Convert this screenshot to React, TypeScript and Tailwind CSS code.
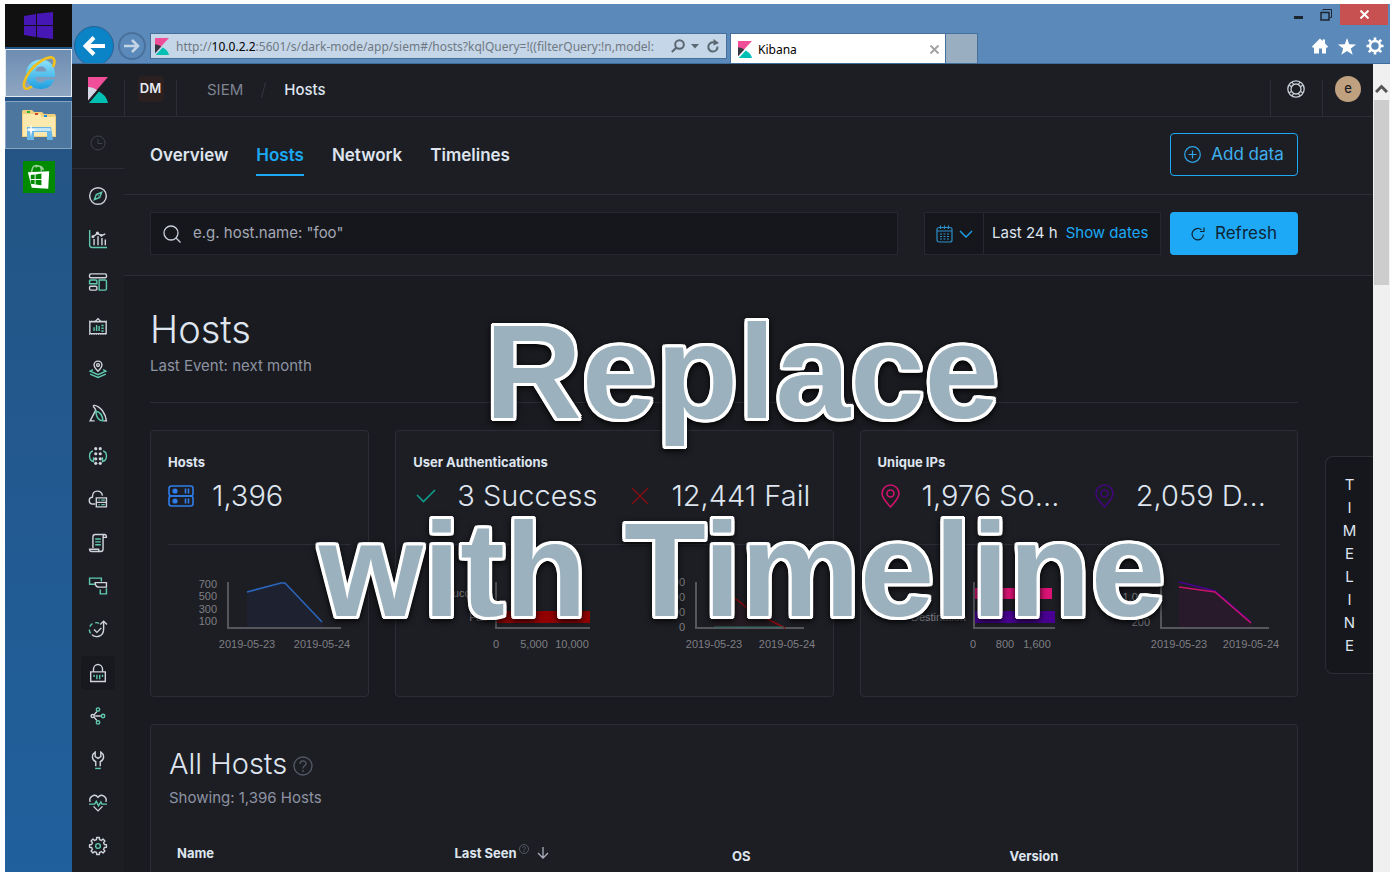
import React from "react";

type Children = { children: React.ReactNode };

const LINE = "#d0d4dc";
const TEAL = "#5fc9ae";

function NavSvg({ children }: Children) {
  return (
    <svg viewBox="0 0 32 32" className="size-[18px] overflow-visible" fill="none" stroke={LINE} strokeWidth="2.5" aria-hidden="true">
      {children}
    </svg>
  );
}

function gearPath(cx: number, cy: number, outer: number, inner: number, teeth: number) {
  const step = (Math.PI * 2) / teeth;
  const point = (r: number, a: number) => `${(cx + r * Math.cos(a)).toFixed(2)} ${(cy + r * Math.sin(a)).toFixed(2)}`;
  let d = "";
  for (let i = 0; i < teeth; i++) {
    const a = i * step - Math.PI / 2;
    d += `${i === 0 ? "M" : "L"}${point(outer, a - step * 0.2)}L${point(outer, a + step * 0.2)}L${point(inner, a + step * 0.3)}L${point(inner, a + step * 0.7)}`;
  }
  return d + "Z";
}

const navItems: { label: string; active?: boolean; art: React.ReactNode }[] = [
  { label: "Discover", art: <><circle cx="16" cy="16" r="14.8" /><path stroke={TEAL} d="M22.5 9.5l-3.5 9-9.5 4 3.5-9zM16 16l1-1" /></> },
  { label: "Visualize", art: <><path stroke={TEAL} d="M1.2 0v27a4 4 0 0 0 4 4H32" /><path d="M9 16v11M16 11v16M23 14v13M29 17v10M7 12l8-6 7 4 7-3" /><circle cx="15" cy="5.5" r="1.6" /><circle cx="22" cy="9.5" r="1.2" /><circle cx="7" cy="12" r="1.4" /></> },
  { label: "Dashboard", art: <><rect x="1" y="1.5" width="30" height="7" rx="2" /><rect x="1" y="23.5" width="13" height="7" rx="2" /><path stroke={TEAL} d="M3 12.5h9a2 2 0 0 1 2 2V19H1v-4.5a2 2 0 0 1 2-2zM18 12.5h11a2 2 0 0 1 2 2v14a2 2 0 0 1-2 2H18z" /></> },
  { label: "Canvas", art: <><path d="M11 8l5-5 5 5M1.5 8.5h29v21h-29z" /><path strokeDasharray="2 2" strokeWidth="1.5" d="M0 31h32M0 7h10M22 7h10" /><path stroke={TEAL} d="M9 18v7M13.5 14v11M18 16v9M22 15h4M22 20h4M22 25h4" /></> },
  { label: "Maps", art: <><path d="M16 20c-4-4-7-7-7-11a7 7 0 0 1 14 0c0 4-3 7-7 11z" /><circle cx="16" cy="9" r="2.5" /><path stroke={TEAL} d="M7 17l-5 3 14 6 14-6-5-3M2 25l14 6 14-6" /></> },
  { label: "Machine Learning", art: <><path d="M8 2c13 2 21 14 23 28H26M8 2v3c2 2 3 3 4 6L2 30h8" /><path stroke={TEAL} d="M12 13c7 1 12 8 13 17-8 0-12-7-13-17z" /></> },
  { label: "Graph", art: <><path stroke={TEAL} d="M7 7C2 8 1 12 1 16c0 6 2 9 7 10v-8M25 7c5 1 6 5 6 9 0 6-2 9-7 10v-8" /><g fill={LINE} stroke="none"><circle cx="12" cy="3" r="2.8" /><circle cx="20" cy="3" r="2.8" /><circle cx="12" cy="12" r="2.8" /><circle cx="20" cy="12" r="2.8" /><circle cx="12" cy="21" r="2.8" /><circle cx="20" cy="21" r="2.8" /><circle cx="12" cy="29" r="2.8" /><circle cx="20" cy="29" r="2.8" /></g></> },
  { label: "Infrastructure", art: <><path d="M11 25H7a6 6 0 0 1-1-12C6 6 10 2 15 2s8 3 9 8M13 14h18v16H13zM13 22h18" /><path stroke={TEAL} d="M17 18h2M22 18h6M17 26h2M22 26h6" /></> },
  { label: "Logs", art: <><path d="M7 25V5c0-3 2-4 4-4h17c2 0 3 2 3 5h-6M25 6v20c0 3-2 5-4 5H5c-3 0-4-2-4-4h16c0 2 1 4 4 4M25 6c0-3 1-5 3-5" /><path stroke={TEAL} d="M11 9h10M11 14h10M11 19h10" /></> },
  { label: "APM", art: <><path stroke={TEAL} d="M12 13H1V2h21v6M20 22v8h11V20" /><path d="M11 10h20v8H19c-5 0-8-3-8-8z" /></> },
  { label: "Uptime", art: <><path stroke={TEAL} strokeDasharray="7 5" d="M18 6A12 12 0 0 0 5 26" /><path d="M5 26c6 6 21 5 21-10V3M20 8l6-6 6 6M9 17l5 5 8-8" /></> },
  { label: "SIEM", active: true, art: <><path d="M3 14h26v17H3zM8 14V9a8 8 0 0 1 16 0v5" /><path stroke={TEAL} d="M9 19v4M14 19v8M19 19v8M24 19v4" /></> },
  { label: "Stack", art: <><circle cx="6.5" cy="16" r="2.8" /><path d="M11 16h10M9 14l5-6M9 18l5 6" /><g stroke={TEAL}><circle cx="16" cy="4.5" r="3" /><circle cx="16" cy="27.5" r="3" /><circle cx="25" cy="16" r="3" /></g></> },
  { label: "Dev Tools", art: <><path d="M12 27v-8c-4-2-6-5-6-9 0-3 2-6 5-8v8l5 3 5-3V2c3 2 5 5 5 8 0 4-2 7-6 9v8" /><path stroke={TEAL} d="M11 31h10" /></> },
  { label: "Monitoring", art: <><path d="M2 14C-1 5 10-2 16 6c6-8 17-1 14 8M8 22l8 8 8-8" /><path stroke={TEAL} d="M0 18h10l3-5 4 8 4-7 2 4h9" /></> },
  { label: "Management", art: <><path strokeLinejoin="round" d={gearPath(16, 16, 15.2, 11.6, 8)} /><circle stroke={TEAL} cx="16" cy="16" r="4.2" /></> },
];

function KibanaMark({ className, mid }: { className: string; mid: string }) {
  return (
    <svg viewBox="0 0 20 26" className={className} preserveAspectRatio="none" aria-hidden="true">
      <path fill="#f04e98" d="M0 0h20L0 23z" />
      <path fill={mid} d="M0 10v13.5L9 13C6 11 3 10 0 10z" />
      <path fill="#00bfb3" d="M11 14.5L1 26h19c-1-5-4-9-9-11.5z" />
    </svg>
  );
}

function Taskbar() {
  return (
    <aside className="flex w-[67px] shrink-0 flex-col bg-linear-to-b from-[#245280] to-[#20609d]">
      <button aria-label="Start" className="flex h-[43px] items-center justify-center bg-[#111112]">
        <svg viewBox="0 0 29 27" className="h-[27px] w-[29px]" fill="#4617b4">
          <path d="M0 4l12-2v11H0zM13 1.8L29 0v13H13zM0 14h12v11L0 23zM13 14h16v13l-16-1.8z" />
        </svg>
      </button>
      <div className="flex flex-col gap-1 py-0.5">
        <button aria-label="Internet Explorer" className="flex h-12 items-center justify-center border border-[#e3e9f0] bg-linear-to-b from-[#6d8db2] to-[#8fa6c2]">
          <svg viewBox="0 0 34 34" className="size-[34px]" fill="none">
            <defs>
              <linearGradient id="ieBlue" x1="0" y1="0" x2="0" y2="1">
                <stop offset="0" stopColor="#8fe3fb" />
                <stop offset="1" stopColor="#1f9fe0" />
              </linearGradient>
            </defs>
            <path fill="url(#ieBlue)" fillRule="evenodd" d="M19 3.5C10 3.5 4 10 4 18.5S10 33 19 33c7 0 11.5-4 13-9.5h-8c-1 2-2.5 3-5 3-3.5 0-5.5-2-5.8-5.5H33C34 10 28 3.5 19 3.5zM13.3 15.5c.6-3.3 2.7-5 5.7-5s5 1.7 5.4 5z" />
            <path stroke="#f3c11b" strokeWidth="2.6" strokeLinecap="round" d="M31.5 10c1.5-4 1.5-7.5-1.5-8.5C25 .5 14 7 8 15 3 22 0 30 3 32.3c1.5 1 4 0 6-1.3" />
          </svg>
        </button>
        <button aria-label="File Explorer" className="flex h-12 items-center justify-center border border-[#86a5c4] bg-[#4d769f]">
          <svg viewBox="0 0 34 32" className="h-8 w-[34px]">
            <path fill="#f0cf7d" d="M0 2l1-1h9l2 2h8l2 2h11l1 2v21H0z" />
            <path fill="#fbe9ad" d="M1 5h17l2 3h13v19H1z" />
            <path fill="#2fae3c" d="M5 2h3v2H5z" />
            <path fill="#d9472b" d="M13 4h3v2h-3z" />
            <path fill="#1e8fe0" d="M22 6h3v2h-3z" />
            <path fill="#69b7e6" d="M5 18h24l2 13h-6v-8H12v8H5z" />
            <path fill="#c3e6f8" d="M6 19h22l1 3H6z" />
            <path fill="#fff" d="M9 15l1 5 5 1-5 1-1 6-1-6-5-1 5-1z" />
          </svg>
        </button>
      </div>
      <button aria-label="Store" className="mt-2.5 flex size-8 items-center justify-center self-center bg-[#008a00]">
        <svg viewBox="0 0 33 32" className="size-8">
          <path fill="none" stroke="#9bd19b" strokeWidth="1.5" d="M9 12c0-6 2-8 5-8s5 2 5 6M13 6c2-2 7-2 8 3" />
          <path fill="#fff" d="M5 11l22-1-1 18-17-1z" />
          <path fill="#008a00" d="M8 14l4-.5V18H8zM13 13.300l6-.8V18h-6zM8 19h4v4.500l-4-.5zM13 19h6v5.500l-6-.8z" />
        </svg>
      </button>
    </aside>
  );
}

function BrowserChrome() {
  return (
    <header className="flex h-[60px] items-stretch overflow-hidden border-b border-[#3f6d9c] bg-[#5b8aba] font-['Noto_Sans','Open_Sans',sans-serif]">
      <div className="flex items-start gap-1 pt-[22px] pl-0.5">
        <button aria-label="Back" className="flex size-10 items-center justify-center rounded-full border border-[#2b5f93] bg-[#0a84c6]">
          <svg viewBox="0 0 22 20" className="h-5 w-[22px]" fill="none" stroke="#fff" strokeWidth="4">
            <path d="M22 10H3M11 1.5L2.5 10l8.5 8.5" />
          </svg>
        </button>
        <button aria-label="Forward" className="mt-1.5 flex size-7 items-center justify-center rounded-full border-2 border-[#48719c]">
          <svg viewBox="0 0 16 14" className="h-3.5 w-4" fill="none" stroke="#c3d4e5" strokeWidth="2.6">
            <path d="M0 7h14M8 1l6 6-6 6" />
          </svg>
        </button>
      </div>
      <div className="ml-1 flex min-w-0 flex-1 items-start pt-[29px]">
        <div className="flex h-[26px] w-[577px] shrink-0 items-center border border-[#45709c] bg-[#c5d6e8] pr-1.5 pl-1">
          <KibanaMark className="h-[17px] w-3.5" mid="#343741" />
          <div className="ml-[7px] min-w-0 flex-1 overflow-hidden pt-0.5 text-xs leading-5 whitespace-nowrap text-[#6f7983]">
            http://<span className="text-black">10.0.2.2</span>:5601/s/dark-mode/app/siem#/hosts?kqlQuery=!((filterQuery:!n,model:
          </div>
          <div className="flex items-center gap-1.5">
            <button aria-label="Search">
              <svg viewBox="0 0 14 14" className="size-3.5" fill="none" stroke="#5b6771" strokeWidth="2">
                <circle cx="8.5" cy="5.5" r="4.3" /><path d="M5.5 8.5L.8 13" />
              </svg>
            </button>
            <button aria-label="Show history">
              <svg viewBox="0 0 8 5" className="h-[5px] w-2" fill="#5b6771"><path d="M0 0h8L4 4.5z" /></svg>
            </button>
            <button aria-label="Reload" className="ml-0.5">
              <svg viewBox="0 0 13 14" className="h-3.5 w-[13px]" fill="none" stroke="#5b6771" strokeWidth="2">
                <path d="M10.5 7.5A4.6 4.6 0 1 1 7 3.5" /><path fill="#5b6771" stroke="none" d="M6.5 0l5.5 4-5.5 2.5z" />
              </svg>
            </button>
          </div>
        </div>
        <div className="ml-[3px] flex h-[31px] w-[216px] items-center border border-b-0 border-[#45709c] bg-white pr-1.5 pl-[7px]">
          <KibanaMark className="h-[17px] w-3.5" mid="#343741" />
          <span className="ml-1.5 flex-1 pt-0.5 text-xs text-black">Kibana</span>
          <button aria-label="Close tab">
            <svg viewBox="0 0 9 9" className="size-[9px]" stroke="#a3a3a3" strokeWidth="2"><path d="M.5.5l8 8M8.5.5l-8 8" /></svg>
          </button>
        </div>
        <button aria-label="New tab" className="h-[31px] w-8 border border-b-0 border-l-0 border-[#45709c] bg-[#9aaec2]" />
      </div>
      <div className="flex flex-col items-end">
        <div className="flex h-[21px] items-stretch pr-0.5">
          <button aria-label="Minimize" className="flex w-7 items-center justify-center">
            <span className="mt-1.5 h-[3px] w-[9px] bg-[#1d2630]" />
          </button>
          <button aria-label="Restore" className="flex w-7 items-center justify-center">
            <svg viewBox="0 0 12 12" className="size-3" fill="none" stroke="#1d2630"><path d="M3 1.5V.5h8.500v8h-1.500" /><path strokeWidth="1.5" d="M1 3.500h8v7.500H1z" /></svg>
          </button>
          <button aria-label="Close" className="flex w-12 items-center justify-center bg-[#c75050]">
            <svg viewBox="0 0 9 9" className="size-[9px]" stroke="#fff" strokeWidth="2"><path d="M.5.5l8 8M8.5.5l-8 8" /></svg>
          </button>
        </div>
        <div className="mt-3 flex items-center gap-2.5 pr-1.5">
          <button aria-label="Home">
            <svg viewBox="0 0 16 16" className="size-4" fill="#fff"><path d="M8 .5l2.500 2.500V1.500h2.500v4l3 3-1 1.500-1-.8V15.500h-4v-5H7v5H2V9.200l-1 .8-1-1.500z" /></svg>
          </button>
          <button aria-label="Favorites">
            <svg viewBox="0 0 18 17" className="h-[17px] w-[18px]" fill="#fff"><path d="M9 0l2.200 6.200 6.800.3-5.200 4 1.900 6.300L9 13l-5.700 3.800 1.900-6.300L0 6.500l6.800-.3z" /></svg>
          </button>
          <button aria-label="Tools">
            <svg viewBox="0 0 18 18" className="size-[18px]" fill="none" stroke="#fff"><circle cx="9" cy="9" r="5" strokeWidth="2.6" /><path strokeWidth="2.6" d="M9 .5v3M9 14.500v3M.5 9h3M14.500 9h3M2.800 2.800l2 2M13.200 13.200l2 2M2.800 15.200l2-2M13.200 4.800l2-2" /></svg>
          </button>
        </div>
      </div>
    </header>
  );
}

function TopBar() {
  return (
    <div className="flex h-[53px] shrink-0 items-center border-b border-[#2c2e37] bg-[#1d1e24]">
      <a href="#home" aria-label="Kibana home" className="flex w-[52px] justify-center">
        <KibanaMark className="h-[26px] w-5" mid="#d4dae5" />
      </a>
      <div className="flex h-9 w-[53px] items-start justify-center self-end border-x border-[#2c2e37]">
        <button className="-mt-1 flex size-[26px] items-center justify-center rounded bg-[#2b1f20] text-[13px] font-semibold text-[#e8eaf0]">DM</button>
      </div>
      <nav aria-label="Breadcrumb" className="ml-[30px] flex items-center gap-5 text-[15px]">
        <a href="#siem" className="text-[#7f8492]">SIEM</a>
        <span className="h-4 w-px rotate-15 bg-[#343741]" />
        <a href="#hosts" className="font-medium text-[#dfe5ef]">Hosts</a>
      </nav>
      <div className="ml-auto flex h-9 items-start self-end">
        <button aria-label="Help" className="flex h-full w-[52px] items-start justify-center border-l border-[#2c2e37] pr-0.5">
          <svg viewBox="0 0 18 18" className="size-[18px]" fill="none" stroke="#c9cfda" strokeWidth="1.3">
            <circle cx="9" cy="9" r="8.2" /><circle cx="9" cy="9" r="5" /><path d="M2 5l3 2M5 2l2 3M13 2l-2 3M16 5l-3 2M2 13l3-2M5 16l2-3M13 16l-2-3M16 13l-3-2" />
          </svg>
        </button>
        <div className="flex h-full w-[51px] items-start justify-center border-l border-[#2c2e37]">
          <button className="-mt-1 flex size-[26px] items-center justify-center rounded-full bg-[#bfa180] text-[13px] font-medium text-[#1d1e24]">e</button>
        </div>
      </div>
    </div>
  );
}

function SideNav() {
  return (
    <nav aria-label="Apps" className="flex w-[52px] shrink-0 flex-col bg-[#1d1e24]">
      <button aria-label="Recently viewed" className="flex h-[52px] shrink-0 items-center justify-center border-b border-[#2c2e37]">
        <svg viewBox="0 0 16 16" className="size-4" fill="none" stroke="#40434d"><circle cx="8" cy="8" r="7" /><path d="M8 4v4.500h4" /></svg>
      </button>
      <ul className="grid flex-1 auto-rows-fr pt-[5px] pb-1">
        {navItems.map((item) => (
          <li key={item.label} className="flex items-center justify-center">
            <a href={"#" + item.label} aria-label={item.label} className={item.active ? "flex size-[34px] items-center justify-center rounded bg-[#18191e]" : "flex size-[34px] items-center justify-center"}>
              <NavSvg>{item.art}</NavSvg>
            </a>
          </li>
        ))}
      </ul>
    </nav>
  );
}

function Tabs() {
  return (
    <div className="flex h-[78px] shrink-0 items-center justify-between border-b border-[#2c2e37] bg-[#1d1e24] pr-[75px] pb-0.5 pl-[26px]">
      <nav aria-label="SIEM" className="flex gap-7 text-[17px] font-semibold text-[#dfe5ef]">
        <a href="#overview" className="border-b-2 border-transparent pt-2.5 pb-1.5">Overview</a>
        <a href="#hosts" className="border-b-2 border-[#1ba9f5] pt-2.5 pb-1.5 text-[#1ba9f5]">Hosts</a>
        <a href="#network" className="border-b-2 border-transparent pt-2.5 pb-1.5">Network</a>
        <a href="#timelines" className="border-b-2 border-transparent pt-2.5 pb-1.5">Timelines</a>
      </nav>
      <button className="flex h-[43px] w-32 items-center justify-center gap-2.5 rounded border border-[#1ba9f5] text-[17px] text-[#3fb0ef]">
        <svg viewBox="0 0 17 17" className="size-[17px]" fill="none" stroke="#2fa5e8" strokeWidth="1.2"><circle cx="8.5" cy="8.5" r="7.8" /><path d="M8.5 4.5v8M4.5 8.5h8" /></svg>
        Add data
      </button>
    </div>
  );
}

function Filters() {
  return (
    <div className="flex h-[81px] shrink-0 items-center border-b border-[#2c2e37] bg-[#1d1e24] pr-[75px] pb-[3px] pl-[26px] text-[15px]">
      <label className="flex h-[43px] min-w-0 flex-1 items-center gap-3 border border-[#26282f] bg-[#16171c] px-3">
        <svg viewBox="0 0 18 18" className="size-[18px] shrink-0" fill="none" stroke="#c9cfda" strokeWidth="1.3"><circle cx="8" cy="8" r="7" /><path d="M13 13l4.5 4.5" /></svg>
        <input type="search" aria-label="Search hosts" placeholder={'e.g. host.name: "foo"'} className="min-w-0 flex-1 bg-transparent outline-none placeholder:text-[#a3a8b4]" />
      </label>
      <div className="ml-[26px] flex h-[43px] w-[237px] items-center border border-[#26282f] bg-[#16171c]">
        <button aria-label="Date quick select" className="flex h-full w-[59px] items-center justify-center gap-1.5 border-r border-[#26282f]">
          <svg viewBox="0 0 17 18" className="h-[18px] w-[17px]" fill="none" stroke="#2b8fc7" strokeWidth="1.2"><rect x="1" y="2.5" width="15" height="14.5" rx="2" /><path d="M1 6h15M4.5.5V4M8.5.5V4M12.5.5V4" /><path strokeDasharray="2 1.5" d="M4 9h9.500M4 11.500h9.500M4 14h9.500" /></svg>
          <svg viewBox="0 0 14 8" className="h-2 w-3.5" fill="none" stroke="#1ba9f5" strokeWidth="1.3"><path d="M1 1l6 6 6-6" /></svg>
        </button>
        <button className="flex flex-1 items-center gap-2 pl-2 whitespace-nowrap text-[#dfe5ef]">
          Last 24 h <span className="text-[#1ba9f5]">Show dates</span>
        </button>
      </div>
      <button className="ml-[9px] flex h-[43px] w-32 items-center justify-center gap-2.5 rounded bg-[#1ea9f7] text-[17px] text-[#0e2533]">
        <svg viewBox="0 0 14 14" className="size-3.5" fill="none" stroke="#0e2533" strokeWidth="1.2"><path d="M12.5 7.500A5.700 5.700 0 1 1 10.500 2.800M13 .5v4H9" /></svg>
        Refresh
      </button>
    </div>
  );
}

type Stat = { icon: React.ReactNode; value: string; chart: React.ReactNode };

const axis = { fill: "none", stroke: "#56575c", strokeWidth: 2 };

function Chart({ label, children }: Children & { label: string }) {
  return (
    <svg role="img" aria-label={label} width="188" height="98" className="block overflow-visible font-['Liberation_Sans',Arial,sans-serif] text-[11px]" fill="#7d7e83">
      {children}
    </svg>
  );
}

const statCards: { title: string; wide: boolean; stats: Stat[] }[] = [
  {
    title: "Hosts",
    wide: false,
    stats: [
      {
        icon: <svg viewBox="0 0 26 22" className="h-[22px] w-[26px]" fill="none" stroke="#2f7de9" strokeWidth="1.6"><rect x="1" y="1" width="24" height="10" rx="2.5" /><rect x="1" y="11" width="24" height="10" rx="2.5" /><path d="M17.5 3.500v5M20.500 3.500v5M17.500 13.500v5M20.500 13.500v5" /><circle cx="7" cy="6" r="1.8" fill="#2f7de9" /><circle cx="7" cy="16" r="1.8" fill="#2f7de9" /></svg>,
        value: "1,396",
        chart: (
          <Chart label="Hosts by day">
            <g textAnchor="end"><text x="49" y="23">700</text><text x="49" y="35">500</text><text x="49" y="48">300</text><text x="49" y="60">100</text></g>
            <path fill="#1e2130" d="M79 27l37-10 38 40v6H79z" />
            <path {...axis} d="M60 17v46h113" />
            <path fill="none" stroke="#2a67bd" strokeWidth="1.5" d="M79 27l34-9 4 0 37 39" />
            <g textAnchor="middle"><text x="79" y="83">2019-05-23</text><text x="154" y="83">2019-05-24</text></g>
          </Chart>
        ),
      },
    ],
  },
  {
    title: "User Authentications",
    wide: true,
    stats: [
      {
        icon: <svg viewBox="0 0 26 22" className="h-[22px] w-[26px]" fill="none" stroke="#0e9c8c" strokeWidth="1.6"><path d="M4 10l6.5 6.500L22 5" /></svg>,
        value: "3 Success",
        chart: (
          <Chart label="Authentications by result">
            <g textAnchor="end"><text x="74" y="32">Success</text><text x="74" y="56">Fail</text></g>
            <path fill="#920000" d="M83 46h94v12H83z" />
            <path {...axis} d="M83 17v46h94" />
            <g textAnchor="middle"><text x="83" y="83">0</text><text x="121" y="83">5,000</text><text x="159" y="83">10,000</text></g>
          </Chart>
        ),
      },
      {
        icon: <svg viewBox="0 0 26 22" className="h-[22px] w-[26px]" fill="none" stroke="#7c0d12" strokeWidth="1.6"><path d="M5 3l16 16M21 3L5 19" /></svg>,
        value: "12,441 Fail",
        chart: (
          <Chart label="Authentications by day">
            <g textAnchor="end"><text x="58" y="21">6,000</text><text x="58" y="36">4,000</text><text x="58" y="51">2,000</text><text x="58" y="66">0</text></g>
            <path fill="#241c22" d="M87 17l36 28 35 18H87z" />
            <path {...axis} d="M69 17v46h108" />
            <path fill="none" stroke="#8a0a10" strokeWidth="1.5" d="M87 17l36 28 35 18" />
            <path fill="none" stroke="#2c6e66" d="M87 62h70" />
            <g textAnchor="middle"><text x="87" y="83">2019-05-23</text><text x="160" y="83">2019-05-24</text></g>
          </Chart>
        ),
      },
    ],
  },
  {
    title: "Unique IPs",
    wide: true,
    stats: [
      {
        icon: <svg viewBox="0 0 26 24" className="h-6 w-[26px]" fill="none" stroke="#d3126f" strokeWidth="1.6"><path d="M12.5 23C8 18 4 14 4 9.500a8.500 8.500 0 0 1 17 0C21 14 17 18 12.500 23z" /><circle cx="12.5" cy="9.5" r="3.5" /></svg>,
        value: "1,976 So...",
        chart: (
          <Chart label="Unique IPs by direction">
            <g textAnchor="end"><text x="85" y="32">Src.</text><text x="88" y="56">Destination</text></g>
            <path fill="#db1374" d="M96 23h78v11H96z" />
            <path fill="#490092" d="M96 46h81v12H96z" />
            <path {...axis} d="M96 17v46h81" />
            <g textAnchor="middle"><text x="95" y="83">0</text><text x="127" y="83">800</text><text x="159" y="83">1,600</text></g>
          </Chart>
        ),
      },
      {
        icon: <svg viewBox="0 0 26 24" className="h-6 w-[26px]" fill="none" stroke="#42067c" strokeWidth="1.6"><path d="M12.5 23C8 18 4 14 4 9.500a8.500 8.500 0 0 1 17 0C21 14 17 18 12.500 23z" /><circle cx="12.5" cy="9.5" r="3.5" /></svg>,
        value: "2,059 D...",
        chart: (
          <Chart label="Unique IPs by day">
            <g textAnchor="end"><text x="58" y="36">1,000</text><text x="58" y="61">200</text></g>
            <path fill="#291a2b" d="M87 22l36 5 36 31v5H87z" />
            <path {...axis} d="M69 17v46h108" />
            <path fill="none" stroke="#490092" strokeWidth="1.5" d="M87 17l36 9 36 31" />
            <path fill="none" stroke="#c9136c" strokeWidth="1.5" d="M87 22l36 5 36 31" />
            <g textAnchor="middle"><text x="87" y="83">2019-05-23</text><text x="159" y="83">2019-05-24</text></g>
          </Chart>
        ),
      },
    ],
  },
];

function StatCards() {
  return (
    <div className="grid grid-cols-[minmax(0,1fr)_minmax(0,2fr)_minmax(0,2fr)] gap-[26px]">
      {statCards.map((card) => (
        <section key={card.title} className="h-[267px] rounded border border-[#2c2e37] bg-[#1d1e24] px-[17px] pt-[21px]">
          <h2 className="text-[13px] leading-5 font-bold text-[#dfe5ef]">{card.title}</h2>
          <div className={card.wide ? "grid grid-cols-2 gap-x-[26px]" : "grid grid-cols-1"}>
            {card.stats.map((stat) => (
              <p key={stat.value} className="flex h-12 items-center gap-[18px] text-[29px] leading-10 font-light whitespace-nowrap text-[#dfe5ef]">
                {stat.icon}
                {stat.value}
              </p>
            ))}
          </div>
          <hr className="mt-6 mb-5 border-[#2c2e37]" />
          <div className={card.wide ? "grid grid-cols-2 gap-x-[26px]" : "grid grid-cols-1"}>
            {card.stats.map((stat) => (
              <div key={stat.value} className="min-w-0">{stat.chart}</div>
            ))}
          </div>
        </section>
      ))}
    </div>
  );
}

function HostsPanel() {
  return (
    <section className="mt-[27px] flex-1 rounded-t border border-b-0 border-[#2c2e37] bg-[#1d1e24] px-[18px] pt-[19px]">
      <h2 className="flex items-center gap-1.5 text-[29px] leading-10 font-light text-[#dfe5ef]">
        All Hosts
        <svg viewBox="0 0 20 20" className="mt-1 size-5" fill="none" stroke="#535966" strokeWidth="1.3"><circle cx="10" cy="10" r="9" /><path d="M7 8c0-4 6-4 6-.5 0 2.500-3 2-3 5M10 14v2" /></svg>
      </h2>
      <p className="mt-0.5 text-[15px] leading-6 text-[#8d93a2]">Showing: 1,396 Hosts</p>
      <table className="mt-[33px] w-full table-fixed text-left text-[13px] leading-5 text-[#dfe5ef]">
        <thead>
          <tr>
            <th className="pl-2 align-top font-bold">Name</th>
            <th className="pl-2 align-top font-bold">
              <button className="flex items-center">
                Last Seen
                <svg viewBox="0 0 10 10" className="mb-2 ml-0.5 size-2.5" fill="none" stroke="#535966"><circle cx="5" cy="5" r="4.5" /><path d="M3.5 4c0-2 3-2 3 0 0 1-1.500 1-1.500 2.500M5 7v1" /></svg>
                <svg viewBox="0 0 12 12" className="ml-2 size-3" fill="none" stroke="#aab0bd" strokeWidth="1.3"><path d="M6 0v11M1 6l5 5 5-5" /></svg>
              </button>
            </th>
            <th className="pt-[3px] pl-2 align-top font-bold">OS</th>
            <th className="pt-[3px] pl-2 align-top font-bold">Version</th>
          </tr>
        </thead>
      </table>
    </section>
  );
}

export default function App() {
  return (
    <div className="relative flex h-screen overflow-hidden bg-white pt-1 pl-[5px] font-['Inter',sans-serif]">
      <Taskbar />
      <div className="flex min-w-0 flex-1 flex-col">
        <BrowserChrome />
        <div className="flex min-h-0 flex-1">
          <div className="flex min-w-0 flex-1 flex-col">
            <TopBar />
            <div className="flex min-h-0 flex-1">
              <SideNav />
              <div className="relative flex min-w-0 flex-1 flex-col bg-[#1a1b20]">
                <Tabs />
                <Filters />
                <main className="flex min-h-0 flex-1 flex-col overflow-hidden pr-[75px] pl-[26px]">
                  <div className="mb-[27px] border-b border-[#2c2e37] pt-7 pb-6">
                    <h1 className="text-[38px] leading-[50px] font-light text-[#dfe5ef]">Hosts</h1>
                    <p className="text-[15px] leading-6 text-[#8d93a2]">Last Event: next month</p>
                  </div>
                  <StatCards />
                  <HostsPanel />
                </main>
                <button aria-label="Timeline" className="absolute top-[339px] right-0 flex w-12 flex-col items-center rounded-l-lg border border-r-0 border-[#2c2e37] bg-[#16171c] py-4 text-[15px] leading-[23px] text-[#dfe5ef]">
                  {"TIMELINE".split("").map((letter, i) => (
                    <span key={i}>{letter}</span>
                  ))}
                </button>
              </div>
            </div>
          </div>
          <div className="flex w-[17px] shrink-0 flex-col bg-[#f0f0f0]">
            <button aria-label="Scroll up" className="flex h-9 items-center justify-center pt-3">
              <svg viewBox="0 0 13 9" className="h-[9px] w-[13px]" fill="none" stroke="#555" strokeWidth="3"><path d="M1 8l5.500-5.500L12 8" /></svg>
            </button>
            <div className="h-[185px] border-x border-[#f0f0f0] bg-[#cdcdcd]" />
          </div>
        </div>
      </div>
      <div className="pointer-events-none absolute inset-x-0 top-[273px] pl-[94px] text-center font-['Liberation_Sans',Arial,sans-serif] text-[134px] leading-[198px] font-bold whitespace-nowrap text-[#9bb1be] drop-shadow-[0_2px_3px_rgba(0,0,0,0.9)] [text-shadow:3px_0_white,-3px_0_white,0_3px_white,0_-3px_white,3px_2px_white,3px_-2px_white,-3px_2px_white,-3px_-2px_white,2px_3px_white,2px_-3px_white,-2px_3px_white,-2px_-3px_white]">
        <p>Replace</p>
        <p>with Timeline</p>
      </div>
    </div>
  );
}
